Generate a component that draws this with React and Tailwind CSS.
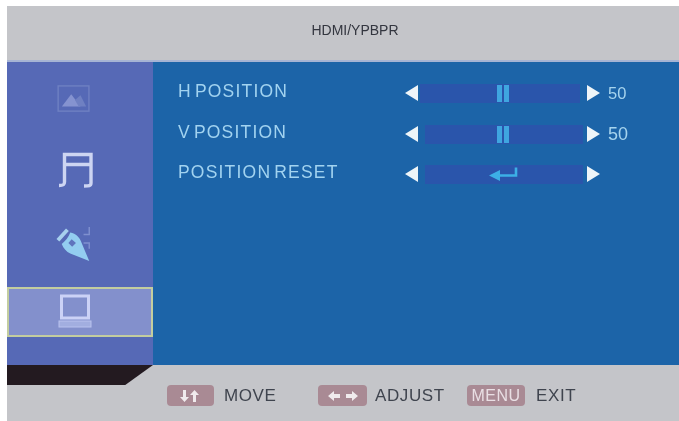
function Tri({ dir }) {
  return (
    <svg width="13" height="16" viewBox="0 0 13 16" className="shrink-0">
      <polygon points={dir === "l" ? "13,0 13,16 0,8" : "0,0 0,16 13,8"} fill="#eef5f8" />
    </svg>
  );
}

function Handle({ shift }) {
  return (
    <div className={`flex gap-[2px] h-[17px] ${shift}`}>
      <div className="w-[5px] bg-[#3fa6e0]" />
      <div className="w-[5px] bg-[#3fa6e0]" />
    </div>
  );
}

function Enter() {
  return (
    <svg width="30" height="16" viewBox="0 0 30 16">
      <path d="M27 1.5V9.5H9" stroke="#3cb0e6" strokeWidth="2.6" fill="none" />
      <polygon points="0,9.5 11,4 11,15" fill="#3cb0e6" />
    </svg>
  );
}

function Row({ label, inset, trackW, arrowGap, value, valueClass, mt, children }) {
  return (
    <div className={`flex items-center h-[22px] ${mt}`}>
      <div className="w-[227px] pb-[4px] text-[17.5px] tracking-[1.2px] [word-spacing:-3px] text-[#a2d3f0] whitespace-nowrap">{label}</div>
      <Tri dir="l" />
      <div className={`${inset} ${trackW} h-[19px] bg-[#2a55ab] flex items-center justify-center`}>{children}</div>
      <div className={arrowGap}><Tri dir="r" /></div>
      {value && <div className={`ml-[8px] text-[#a6d4ee] ${valueClass}`}>{value}</div>}
    </div>
  );
}

function Pill({ w, children }) {
  return (
    <div className={`${w} h-[21px] rounded-[4px] bg-[#a98a94] flex items-center justify-center text-[#e9dfe4]`}>{children}</div>
  );
}

function Label({ w, children }) {
  return <div className={`${w} text-[17px] tracking-[0.6px] text-[#3f444e] whitespace-nowrap`}>{children}</div>;
}

export default function App() {
  return (
    <div className="w-[679px] h-[421px] bg-white pt-[6px] pl-[7px] overflow-hidden font-['Liberation_Sans',Arial,sans-serif]">
      <div className="h-[415px] flex flex-col bg-[#c4c5c9] blur-[0.5px]">
        <div className="h-[54px] flex items-center justify-center pl-[24px] pb-[5px] text-[14px] text-[#33363f]">
          HDMI/YPBPR
        </div>
        <div className="h-[305px] flex bg-[#1c64a8] border-t-2 border-[#a6b4d4]">
          <div className="w-[146px] bg-[#5669b6] flex flex-col">
            <div className="h-[73px] flex items-center justify-center pr-[12px]">
              <svg width="34" height="28" viewBox="0 0 36 30" fill="none">
                <rect x="1" y="1" width="33" height="27" stroke="#6f80c2" strokeWidth="1.5" />
                <polygon points="5,23 15,10 25,23" fill="#8593d0" />
                <polygon points="19,16 25,11 31,23 23,23" fill="#6f80c2" />
              </svg>
            </div>
            <div className="h-[70px] flex items-center justify-center pr-[9px]">
              <svg width="36" height="36" viewBox="0 0 36 36" fill="none">
                <path d="M1 33.5C5 33.5 6.5 33 6.5 30V2.5H33V31C33 34 31 34 26 34M6.5 12.5H33" stroke="#cdd5f2" strokeWidth="3.4" />
              </svg>
            </div>
            <div className="h-[82px] flex items-start justify-center pt-[20px] pr-[10px]">
              <svg width="40" height="38" viewBox="0 0 38 40" fill="none">
                <path d="M1 16L11 5" stroke="#a7d0ee" strokeWidth="4" />
                <path d="M5 20C9 17 12 13 14 8C20 9 24 13 26 19L34 38L14 30C10 28 7 25 5 20Z" fill="#93cdf0" />
                <path d="M12 19L15.5 15L20 19L16 23Z" fill="#5f74bd" />
                <path d="M28 10H34V2M28 19H34V25" stroke="#7f90cf" strokeWidth="1.5" />
              </svg>
            </div>
            <div className="h-[50px] bg-[#8390cc] border-2 border-[#c3cd9f] flex items-center justify-center pr-[10px]">
              <svg width="34" height="36" viewBox="0 0 34 36" fill="none">
                <rect x="3.5" y="2" width="27" height="22" stroke="#ccd2f6" strokeWidth="3" />
                <rect x="1" y="27" width="32" height="6" fill="#a2aee0" stroke="#b9c2ee" />
              </svg>
            </div>
          </div>
          <div className="flex-1 pl-[25px] pt-[20px]">
            <Row label="H POSITION" inset="ml-[2px]" trackW="w-[160px]" arrowGap="ml-[7px]" value="50" valueClass="text-[16.5px]">
              <Handle shift="ml-[6px]" />
            </Row>
            <Row label="V POSITION" inset="ml-[7px]" trackW="w-[158px]" arrowGap="ml-[4px]" value="50" valueClass="text-[18px]" mt="mt-[19px]">
              <Handle shift="mr-[2px]" />
            </Row>
            <Row label="POSITION RESET" inset="ml-[7px]" trackW="w-[158px]" arrowGap="ml-[4px]" mt="mt-[18px]">
              <Enter />
            </Row>
          </div>
        </div>
        <div className="flex-1 flex items-start">
          <div className="w-[146px] h-[20px] bg-[#231a20] [clip-path:polygon(0_0,100%_0,81%_100%,0_100%)]" />
          <div className="ml-[14px] mt-[18px] flex items-center">
            <Pill w="w-[47px]">
              <svg width="28" height="14" viewBox="0 0 28 14" fill="#f0ebed">
                <path d="M6 1H9V8H12L7.5 13L3 8H6Z" />
                <path d="M17.5 1L22 6H19V13H16V6H13Z" />
              </svg>
            </Pill>
            <div className="ml-[10px]"><Label w="w-[94px]">MOVE</Label></div>
            <Pill w="w-[49px]">
              <svg width="30" height="10" viewBox="0 0 30 10" fill="#f0ebed">
                <path d="M0 5L6 0V3H12V7H6V10Z" />
                <path d="M30 5L24 0V3H18V7H24V10Z" />
              </svg>
            </Pill>
            <div className="ml-[8px]"><Label w="w-[92px]">ADJUST</Label></div>
            <Pill w="w-[58px]"><span className="text-[16px] tracking-[0.5px]">MENU</span></Pill>
            <div className="ml-[11px]"><Label w="w-[44px]">EXIT</Label></div>
          </div>
        </div>
      </div>
    </div>
  );
}
